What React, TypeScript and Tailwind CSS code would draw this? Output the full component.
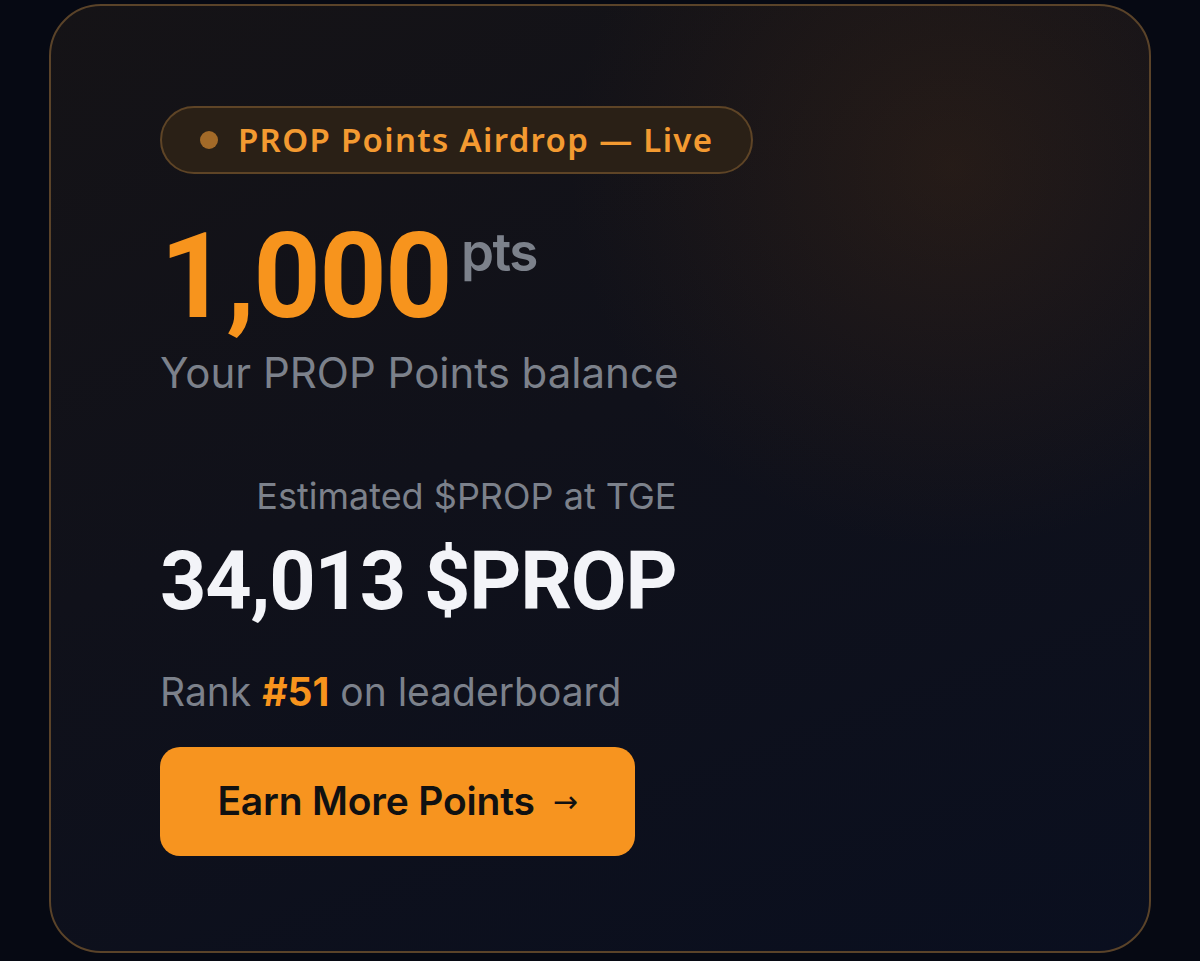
import React from 'react';

const App: React.FC = () => {
    return (
        <div className="w-full h-[961px] bg-[#060913] px-[49px] pt-[4px] font-['Inter',sans-serif]">
            <div className="h-[949px] rounded-[52px] border-2 border-[#5a4329] bg-[radial-gradient(circle_at_82%_17%,rgba(110,62,18,0.22),transparent_32%),linear-gradient(160deg,#151316_0%,#10111a_45%,#0a0f1f_100%)] pl-[109px] pt-[100px]">
                {/* badge */}
                <div className="inline-flex items-center h-[68px] w-[593px] rounded-full border-2 border-[#5e4426] bg-[#2a2016] pl-[38px]">
                    <span className="w-[18px] h-[18px] rounded-full bg-[#a36a28]" />
                    <span className="ml-[20px] font-['Noto_Sans',sans-serif] font-semibold text-[33px] tracking-[0.04em] text-[#f39a31]">
                        PROP Points Airdrop — Live
                    </span>
                </div>

                {/* balance */}
                <div className="flex items-start mt-[44px]">
                    <span className="font-['Roboto',sans-serif] font-bold text-[118px] leading-none tracking-[-0.015em] text-[#f7941d]">
                        1,000
                    </span>
                    <span className="ml-[10px] mt-[8px] font-semibold text-[53px] leading-none tracking-[-0.03em] text-[#7c818b]">
                        pts
                    </span>
                </div>
                <p className="mt-[16px] text-[42px] leading-none text-[#7c818b]">Your PROP Points balance</p>

                {/* estimate */}
                <div className="inline-flex flex-col items-end mt-[84px]">
                    <p className="text-[36px] leading-none text-[#7c818b]">Estimated $PROP at TGE</p>
                    <p className="mt-[27px] font-['Roboto',sans-serif] font-bold text-[81px] leading-none tracking-[-0.015em] text-[#f3f4f8]">
                        34,013 $PROP
                    </p>
                </div>

                <p className="mt-[50px] text-[39px] leading-none text-[#7c818b]">
                    Rank <span className="font-bold text-[#f7941d]">#51</span> on leaderboard
                </p>

                <button className="mt-[36px] flex items-center justify-center w-[475px] h-[109px] rounded-[20px] bg-[#f7941f] text-[#111111] font-semibold text-[39px] tracking-[-0.005em]">
                    Earn More Points
                    <span className="ml-[18px] font-['DejaVu_Sans',sans-serif] font-normal text-[30px]">→</span>
                </button>
            </div>
        </div>
    );
};

export default App;
